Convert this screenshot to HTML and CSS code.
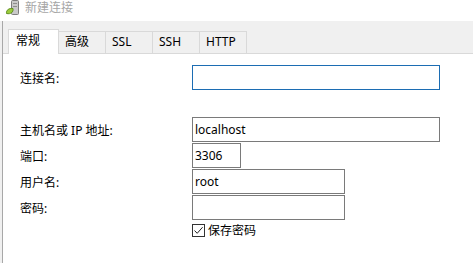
FILE: index.html
```html
<!DOCTYPE html>
<html lang="zh-CN">
<head>
  <meta charset="UTF-8" />
  <title>新建连接</title>
  <link rel="stylesheet" href="styles.css">
</head>
<body>
  <div class="window">
    <div class="titlebar">
      <svg class="app-icon" width="16" height="16" viewBox="0 0 16 16">
        <rect x="8.5" y="0.5" width="7" height="14" rx="1" fill="#c9c9c9" stroke="#7d7d7d"/>
        <line x1="10" y1="3.5" x2="14" y2="3.5" stroke="#8d8d8d"/>
        <line x1="10" y1="6.5" x2="14" y2="6.5" stroke="#8d8d8d"/>
        <path d="M3.5 13.5 C3 10 6 8 10 8.5 C10.5 12 8 14.5 3.5 13.5 Z" fill="#9ccc3c" stroke="#5f8f1e"/>
      </svg>
      <span class="title">新建连接</span>
    </div>

    <div class="frame">
      <div class="tabs">
        <div class="tab active">常规</div>
        <div class="tab">高级</div>
        <div class="tab">SSL</div>
        <div class="tab">SSH</div>
        <div class="tab">HTTP</div>
      </div>

      <div class="panel">
        <div class="row row-first">
          <label class="label">连接名:</label>
          <input class="field field-wide focused" type="text" value="">
        </div>
        <div class="row">
          <label class="label">主机名或 IP 地址:</label>
          <input class="field field-wide" type="text" value="localhost">
        </div>
        <div class="row">
          <label class="label">端口:</label>
          <input class="field field-port" type="text" value="3306">
        </div>
        <div class="row">
          <label class="label">用户名:</label>
          <input class="field field-mid" type="text" value="root">
        </div>
        <div class="row">
          <label class="label">密码:</label>
          <input class="field field-mid" type="password" value="">
        </div>
        <div class="check-row">
          <span class="checkbox">
            <svg width="11" height="11" viewBox="0 0 11 11">
              <path d="M1.5 5.5 L4.2 8.3 L9.6 2.2" fill="none" stroke="#222" stroke-width="1"/>
            </svg>
          </span>
          <span class="check-label">保存密码</span>
        </div>
      </div>
    </div>
  </div>
</body>
</html>
```

FILE: styles.css
```css
body {
  margin: 0;
  background: #f0f0f0;
  font-family: 'Noto Sans', 'Noto Sans CJK SC', sans-serif;
  font-size: 12px;
  color: #000;
}
.window {
  width: 473px;
  height: 263px;
  overflow: hidden;
  display: flex;
  flex-direction: column;
}
.titlebar {
  height: 21px;
  box-sizing: border-box;
  background: #fff;
  display: flex;
  align-items: flex-start;
  gap: 6px;
  padding-left: 3px;
}
.app-icon {
  flex: none;
}
.title {
  color: #a6a6a6;
  font-size: 12px;
  line-height: 16px;
}
.frame {
  flex: 1;
  margin-left: 2px;
  border-left: 1px solid #a8a8a8;
  display: flex;
  flex-direction: column;
}
.tabs {
  height: 33px;
  box-sizing: border-box;
  display: flex;
  align-items: flex-end;
  padding-left: 5px;
  border-bottom: 1px solid #d9d9d9;
}
.tab {
  width: 47px;
  height: 22px;
  box-sizing: border-box;
  padding-left: 6px;
  border-top: 1px solid #d9d9d9;
  border-right: 1px solid #d9d9d9;
  line-height: 20px;
}
.tab.active {
  width: 51px;
  height: 25px;
  margin-bottom: -1px;
  padding-left: 7px;
  border-left: 1px solid #d9d9d9;
  background: #fff;
  line-height: 22px;
}
.panel {
  flex: 1;
  background: #fff;
  padding: 11px 0 0 17px;
}
.row {
  display: flex;
  align-items: center;
  height: 25px;
  margin-bottom: 1px;
}
.row-first {
  margin-bottom: 27px;
}
.label {
  width: 172px;
  flex: none;
}
.field {
  height: 25px;
  box-sizing: border-box;
  border: 1px solid #7a7a7a;
  padding: 0 2px;
  margin: 0;
  font-family: inherit;
  font-size: 12px;
  color: #000;
  background: #fff;
  outline: none;
}
.field.focused {
  border-color: #1c6db3;
}
.field-wide {
  width: 248px;
}
.field-mid {
  width: 153px;
}
.field-port {
  width: 49px;
}
.check-row {
  display: flex;
  align-items: center;
  gap: 3px;
  margin-top: 4px;
  padding-left: 172px;
}
.checkbox {
  width: 13px;
  height: 13px;
  box-sizing: border-box;
  border: 1px solid #333;
  display: flex;
  align-items: center;
  justify-content: center;
}
.check-label {
  line-height: 13px;
}
```
